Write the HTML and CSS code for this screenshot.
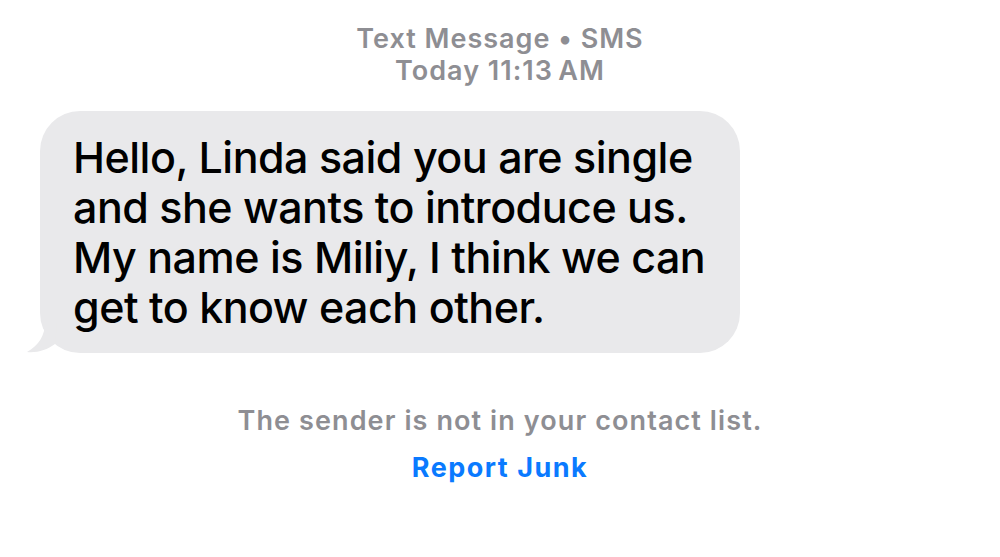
FILE: index.html
```html
<!DOCTYPE html>
<html>
<head>
<meta charset="utf-8">
<link rel="stylesheet" href="styles.css">
</head>
<body>
<div class="screen">
  <div class="header">
    <div class="line">Text Message • SMS</div>
    <div class="line">Today 11:13&#8201;AM</div>
  </div>
  <div class="row">
    <div class="bubble">
      <svg class="tail" width="30" height="30" viewBox="0 0 30 30">
        <path d="M18 0 C18 12 12 22 0 29 C10 30 20 27 28 21 L30 0 Z" fill="#e9e9eb"/>
      </svg>
      <p class="msg">Hello, Linda said you are single and she wants to introduce us. My name is Miliy, I think we can get to know each other.</p>
    </div>
  </div>
  <div class="notice">The sender is not in your contact list.</div>
  <div class="junk">Report Junk</div>
</div>
</body>
</html>
```

FILE: styles.css
```css
html, body {
  margin: 0;
  padding: 0;
  background: #ffffff;
}
.screen {
  width: 1000px;
  height: 557px;
  font-family: Inter, "Noto Sans", sans-serif;
  display: flex;
  flex-direction: column;
}
.header {
  padding-top: 23px;
  text-align: center;
  color: #8e8e93;
  font-size: 27px;
  font-weight: 600;
  line-height: 32px;
  letter-spacing: 1px;
}
.row {
  padding-left: 40px;
  margin-top: 24px;
}
.bubble {
  position: relative;
  width: 700px;
  height: 242px;
  box-sizing: border-box;
  background: #e9e9eb;
  border-radius: 40px;
  padding: 21px 10px 0 33px;
}
.tail {
  position: absolute;
  left: -13px;
  bottom: 0;
}
.msg {
  margin: 0;
  font-size: 43px;
  line-height: 50px;
  font-weight: 500;
  letter-spacing: -0.5px;
  color: #000000;
  width: 650px;
}
.notice {
  margin-top: 52px;
  text-align: center;
  color: #8e8e93;
  font-size: 27px;
  font-weight: 600;
  line-height: 32px;
  letter-spacing: 1.1px;
}
.junk {
  margin-top: 15px;
  text-align: center;
  color: #0a7aff;
  font-size: 27px;
  font-weight: 700;
  line-height: 32px;
  letter-spacing: 1.5px;
}
```
